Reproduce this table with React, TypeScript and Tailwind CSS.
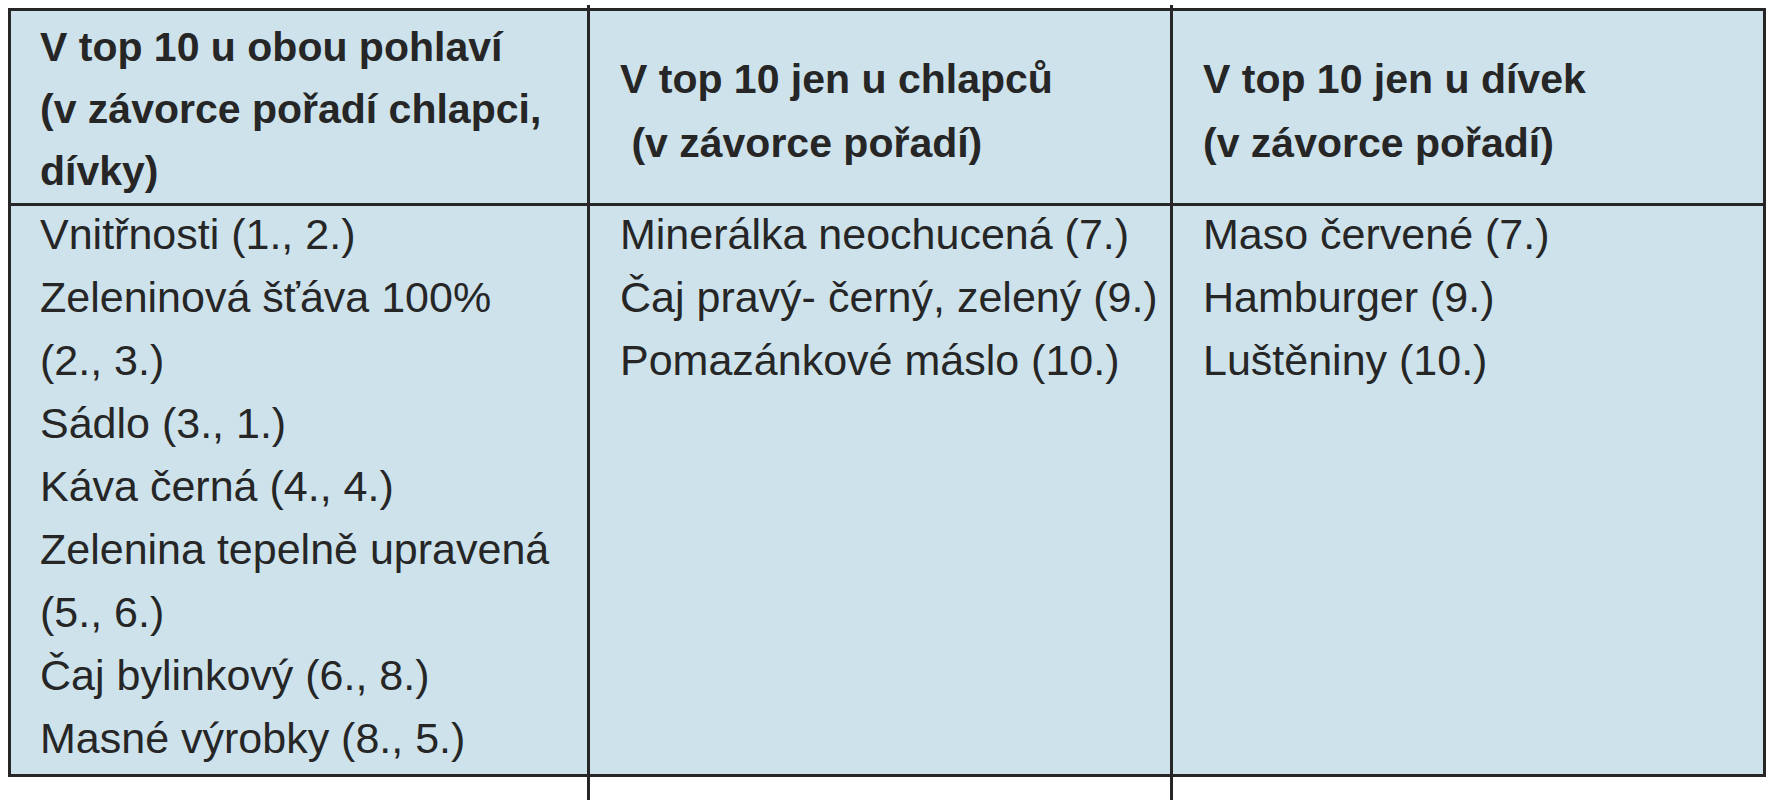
import React from "react";

const col1Header = ["V top 10 u obou pohlaví", "(v závorce pořadí chlapci,", "dívky)"];
const col2Header = ["V top 10 jen u chlapců", "\u00a0(v závorce pořadí)"];
const col3Header = ["V top 10 jen u dívek", "(v závorce pořadí)"];

const col1Body = [
  "Vnitřnosti (1., 2.)",
  "Zeleninová šťáva 100%",
  "(2., 3.)",
  "Sádlo (3., 1.)",
  "Káva černá (4., 4.)",
  "Zelenina tepelně upravená",
  "(5., 6.)",
  "Čaj bylinkový (6., 8.)",
  "Masné výrobky (8., 5.)",
];
const col2Body = ["Minerálka neochucená (7.)", "Čaj pravý- černý, zelený (9.)", "Pomazánkové máslo (10.)"];
const col3Body = ["Maso červené (7.)", "Hamburger (9.)", "Luštěniny (10.)"];

function Lines({ lines }: { lines: string[] }) {
  return (
    <>
      {lines.map((l, i) => (
        <div key={i} className="whitespace-nowrap">
          {l}
        </div>
      ))}
    </>
  );
}

export default function App() {
  return (
    <div className="w-[1788px] h-[800px] bg-white flex font-['Liberation_Sans',Arial,sans-serif] text-[#262626] overflow-hidden">
      <div className="w-[8px] shrink-0" />

      {/* Column 1 */}
      <div className="w-[579px] shrink-0 flex flex-col">
        <div className="h-[8px]" />
        <div className="border-l-[3px] border-t-[3px] border-b-[3px] border-[#262626] bg-[#cde2eb]">
          <div className="h-[192px] flex flex-col justify-center pl-[29px] pt-[4px] font-bold text-[41px] leading-[62px]">
            <Lines lines={col1Header} />
          </div>
          <div className="h-[3px] bg-[#262626]" />
          <div className="h-[571px] pl-[29px] text-[43px] leading-[63px]">
            <div className="-mt-[3px]">
              <Lines lines={col1Body} />
            </div>
          </div>
        </div>
      </div>

      {/* Column 2 */}
      <div className="w-[583px] shrink-0 mt-[5px] h-[795px] border-l-[3px] border-[#262626] flex flex-col">
        <div className="h-[3px]" />
        <div className="border-t-[3px] border-b-[3px] border-[#262626] bg-[#cde2eb]">
          <div className="h-[192px] flex flex-col justify-center pl-[30px] pt-[7px] font-bold text-[41px] leading-[64px]">
            <Lines lines={col2Header} />
          </div>
          <div className="h-[3px] bg-[#262626]" />
          <div className="h-[571px] pl-[30px] text-[43px] leading-[63px]">
            <div className="-mt-[3px]">
              <Lines lines={col2Body} />
            </div>
          </div>
        </div>
      </div>

      {/* Column 3 */}
      <div className="w-[596px] shrink-0 mt-[5px] h-[795px] border-l-[3px] border-[#262626] flex flex-col">
        <div className="h-[3px]" />
        <div className="border-t-[3px] border-b-[3px] border-r-[3px] border-[#262626] bg-[#cde2eb]">
          <div className="h-[192px] flex flex-col justify-center pl-[30px] pt-[7px] font-bold text-[41px] leading-[64px]">
            <Lines lines={col3Header} />
          </div>
          <div className="h-[3px] bg-[#262626]" />
          <div className="h-[571px] pl-[30px] text-[43px] leading-[63px]">
            <div className="-mt-[3px]">
              <Lines lines={col3Body} />
            </div>
          </div>
        </div>
      </div>
    </div>
  );
}
